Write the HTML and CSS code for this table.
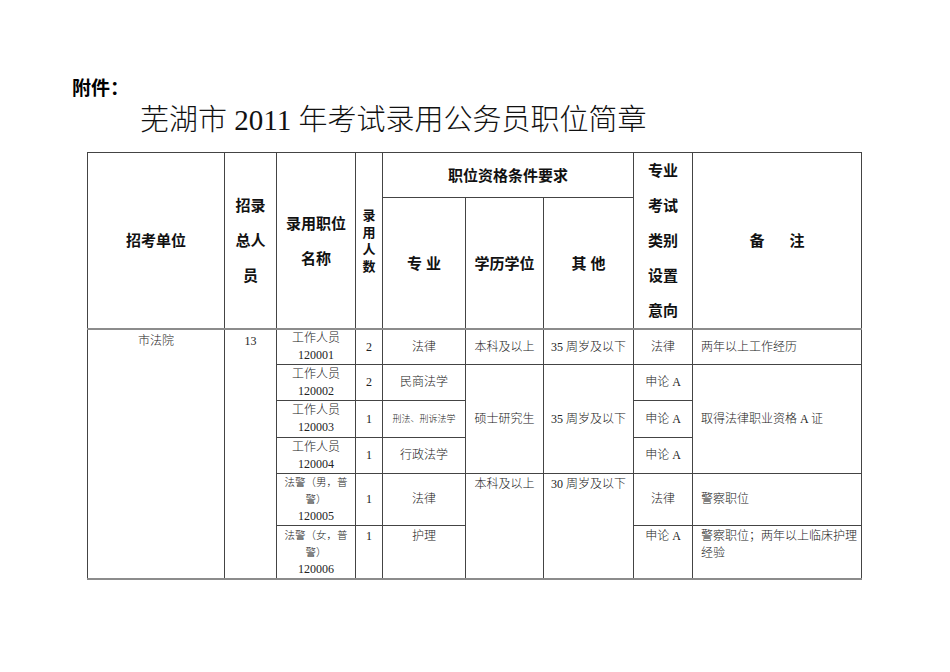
FILE: index.html
```html
<!DOCTYPE html>
<html lang="zh-CN">
<head>
<meta charset="utf-8">
<title>芜湖市2011年考试录用公务员职位简章</title>
<link rel="stylesheet" href="styles.css">
</head>
<body>
<div class="page">
  <div class="attach">附件：</div>
  <h1 class="title">芜湖市 2011 年考试录用公务员职位简章</h1>
  <table class="jobs">
    <colgroup>
      <col class="c1"><col class="c2"><col class="c3"><col class="c4"><col class="c5">
      <col class="c6"><col class="c7"><col class="c8"><col class="c9">
    </colgroup>
    <thead>
      <tr class="h1">
        <th rowspan="2" class="hb">招考单位</th>
        <th rowspan="2" class="hb tall">招录<br>总人<br>员</th>
        <th rowspan="2" class="hb tall">录用职位<br>名称</th>
        <th rowspan="2" class="hb narrow">录用人数</th>
        <th colspan="3">职位资格条件要求</th>
        <th rowspan="2" class="hb tall">专业<br>考试<br>类别<br>设置<br>意向</th>
        <th rowspan="2" class="hb">备&nbsp;&nbsp;&nbsp;&nbsp;&nbsp;&nbsp;注</th>
      </tr>
      <tr class="h2">
        <th class="hb">专&nbsp;业</th>
        <th class="hb">学历学位</th>
        <th class="hb">其&nbsp;他</th>
      </tr>
    </thead>
    <tbody>
      <tr class="r1">
        <td rowspan="6" class="top unit">市法院</td>
        <td rowspan="6" class="top unit">13</td>
        <td class="pos">工作人员<br>120001</td>
        <td>2</td>
        <td>法律</td>
        <td>本科及以上</td>
        <td>35 周岁及以下</td>
        <td>法律</td>
        <td class="note">两年以上工作经历</td>
      </tr>
      <tr class="r2">
        <td class="pos">工作人员<br>120002</td>
        <td>2</td>
        <td>民商法学</td>
        <td rowspan="3">硕士研究生</td>
        <td rowspan="3">35 周岁及以下</td>
        <td>申论 A</td>
        <td rowspan="3" class="note">取得法律职业资格 A 证</td>
      </tr>
      <tr class="r3">
        <td class="pos">工作人员<br>120003</td>
        <td>1</td>
        <td class="tiny">刑法、刑诉法学</td>
        <td>申论 A</td>
      </tr>
      <tr class="r4">
        <td class="pos">工作人员<br>120004</td>
        <td>1</td>
        <td>行政法学</td>
        <td>申论 A</td>
      </tr>
      <tr class="r5">
        <td class="pos"><span class="small">法警（男，普警）</span><br>120005</td>
        <td>1</td>
        <td>法律</td>
        <td rowspan="2" class="top">本科及以上</td>
        <td rowspan="2" class="top">30 周岁及以下</td>
        <td>法律</td>
        <td class="note">警察职位</td>
      </tr>
      <tr class="r6">
        <td class="pos top"><span class="small">法警（女，普警）</span><br>120006</td>
        <td class="top">1</td>
        <td class="top">护理</td>
        <td class="top">申论 A</td>
        <td class="note top">警察职位；两年以上临床护理经验</td>
      </tr>
    </tbody>
  </table>
</div>
</body>
</html>
```

FILE: styles.css
```css
html, body {
  margin: 0;
  padding: 0;
  background: #ffffff;
}

.page {
  padding: 77px 0 0 72px;
  font-family: "Liberation Serif", "Noto Sans CJK SC", serif;
  color: #222;
}

.attach {
  font-family: "Liberation Sans", "Noto Sans CJK SC", sans-serif;
  font-weight: bold;
  font-size: 19px;
  line-height: 23px;
  color: #000;
}

.title {
  margin: 0 0 0 68px;
  font-family: "Liberation Serif", "Noto Sans CJK SC", serif;
  font-weight: 300;
  font-size: 29px;
  line-height: 40px;
  color: #111;
}

.jobs {
  margin: 12px 0 0 15px;
  border-collapse: collapse;
  table-layout: fixed;
  width: 774px;
  border: 1px solid #444;
  border-bottom: 2px solid #8c8c8c;
}

.c1 { width: 137px; }
.c2 { width: 52px; }
.c3 { width: 79px; }
.c4 { width: 27px; }
.c5 { width: 83px; }
.c6 { width: 78px; }
.c7 { width: 90px; }
.c8 { width: 59px; }
.c9 { width: 169px; }

.jobs th,
.jobs td {
  border: 1px solid #444;
  padding: 0 3px;
  text-align: center;
  vertical-align: middle;
}

.jobs th {
  font-family: "Liberation Sans", "Noto Sans CJK SC", sans-serif;
  font-weight: bold;
  font-size: 15px;
  line-height: 35px;
  color: #111;
}

.jobs th.hb {
  border-bottom: 2px solid #8c8c8c;
}

.jobs th.narrow {
  font-size: 13px;
  line-height: 17px;
  padding: 0 6px;
  word-break: break-all;
}

.h1 { height: 45px; }
.h2 { height: 131px; }

.jobs td {
  font-size: 12px;
  line-height: 17px;
  font-weight: 300;
}

.r1 { height: 35px; }
.r2 { height: 36px; }
.r3 { height: 37px; }
.r4 { height: 36px; }
.r5 { height: 52px; }
.r6 { height: 53px; }

.jobs td.top {
  vertical-align: top;
  padding-top: 2px;
}

.jobs td.unit {
  padding-top: 3px;
}

.jobs td.pos {
  padding: 0 4px;
}

.jobs td.pos.top {
  padding-top: 1px;
}

.small {
  font-size: 10.5px;
}

.jobs td.tiny {
  font-size: 9px;
  padding: 0 1px;
}

.jobs td.note {
  text-align: left;
  padding-left: 8px;
  padding-right: 4px;
}
```
